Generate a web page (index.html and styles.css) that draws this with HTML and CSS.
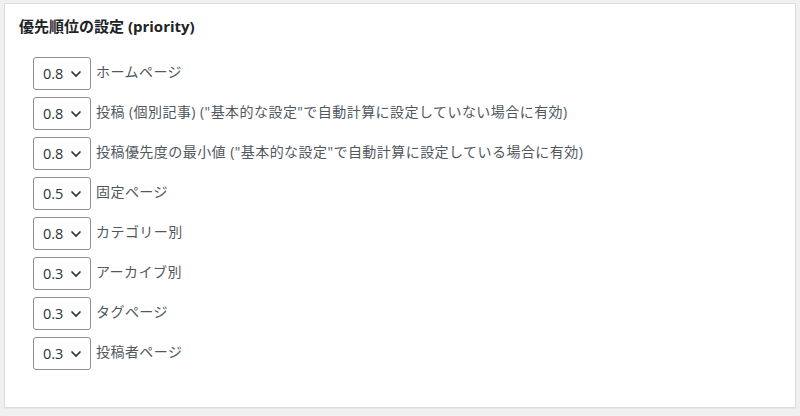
FILE: index.html
```html
<!DOCTYPE html>
<html lang="ja">
<head>
  <meta charset="UTF-8">
  <title>優先順位の設定</title>
  <link rel="stylesheet" href="styles.css">
</head>
<body>
  <div class="postbox">
    <h3 class="hndle">優先順位の設定 (priority)</h3>
    <ul class="priority-list">
      <li>
        <span class="select-wrap">
          <select><option>0.8</option></select>
          <svg class="chev" width="12" height="8" viewBox="0 0 12 8"><path d="M1.5 1.5 L6 6 L10.5 1.5" fill="none" stroke="#2c3338" stroke-width="1.7"/></svg>
        </span>
        <label>ホームページ</label>
      </li>
      <li>
        <span class="select-wrap">
          <select><option>0.8</option></select>
          <svg class="chev" width="12" height="8" viewBox="0 0 12 8"><path d="M1.5 1.5 L6 6 L10.5 1.5" fill="none" stroke="#2c3338" stroke-width="1.7"/></svg>
        </span>
        <label>投稿 (個別記事) ("基本的な設定"で自動計算に設定していない場合に有効)</label>
      </li>
      <li>
        <span class="select-wrap">
          <select><option>0.8</option></select>
          <svg class="chev" width="12" height="8" viewBox="0 0 12 8"><path d="M1.5 1.5 L6 6 L10.5 1.5" fill="none" stroke="#2c3338" stroke-width="1.7"/></svg>
        </span>
        <label>投稿優先度の最小値 ("基本的な設定"で自動計算に設定している場合に有効)</label>
      </li>
      <li>
        <span class="select-wrap">
          <select><option>0.5</option></select>
          <svg class="chev" width="12" height="8" viewBox="0 0 12 8"><path d="M1.5 1.5 L6 6 L10.5 1.5" fill="none" stroke="#2c3338" stroke-width="1.7"/></svg>
        </span>
        <label>固定ページ</label>
      </li>
      <li>
        <span class="select-wrap">
          <select><option>0.8</option></select>
          <svg class="chev" width="12" height="8" viewBox="0 0 12 8"><path d="M1.5 1.5 L6 6 L10.5 1.5" fill="none" stroke="#2c3338" stroke-width="1.7"/></svg>
        </span>
        <label>カテゴリー別</label>
      </li>
      <li>
        <span class="select-wrap">
          <select><option>0.3</option></select>
          <svg class="chev" width="12" height="8" viewBox="0 0 12 8"><path d="M1.5 1.5 L6 6 L10.5 1.5" fill="none" stroke="#2c3338" stroke-width="1.7"/></svg>
        </span>
        <label>アーカイブ別</label>
      </li>
      <li>
        <span class="select-wrap">
          <select><option>0.3</option></select>
          <svg class="chev" width="12" height="8" viewBox="0 0 12 8"><path d="M1.5 1.5 L6 6 L10.5 1.5" fill="none" stroke="#2c3338" stroke-width="1.7"/></svg>
        </span>
        <label>タグページ</label>
      </li>
      <li>
        <span class="select-wrap">
          <select><option>0.3</option></select>
          <svg class="chev" width="12" height="8" viewBox="0 0 12 8"><path d="M1.5 1.5 L6 6 L10.5 1.5" fill="none" stroke="#2c3338" stroke-width="1.7"/></svg>
        </span>
        <label>投稿者ページ</label>
      </li>
    </ul>
  </div>
</body>
</html>
```

FILE: styles.css
```css
body {
  margin: 0;
  padding: 3px 4px 6px 4px;
  background-color: #f0f0f1;
  font-family: "Open Sans", "Noto Sans CJK JP", sans-serif;
  font-size: 14px;
  color: #50575e;
}
.postbox {
  background-color: #fff;
  border: 1px solid #dcdcde;
  box-shadow: 0 1px 1px rgba(0, 0, 0, 0.04);
  height: 405px;
  box-sizing: border-box;
  padding: 0 14px;
}
.hndle {
  margin: 0;
  padding: 12px 0 0 0;
  height: 42px;
  box-sizing: border-box;
  font-size: 15px;
  font-weight: 700;
  line-height: 20px;
  color: #1d2327;
}
.priority-list {
  list-style: none;
  margin: 11px 0 0 0;
  padding: 0 0 0 14px;
}
.priority-list li {
  display: flex;
  align-items: center;
  height: 33px;
  margin-bottom: 7px;
}
.select-wrap {
  position: relative;
  display: inline-block;
  margin-right: 5px;
}
select {
  appearance: none;
  -webkit-appearance: none;
  width: 58px;
  height: 33px;
  padding: 0 20px 0 9px;
  border: 1px solid #8c8f94;
  border-radius: 3px;
  background: #fff;
  font-family: "Open Sans", sans-serif;
  font-size: 14.5px;
  color: #2c3338;
}
.chev {
  position: absolute;
  left: 37px;
  top: 13px;
  pointer-events: none;
}
label {
  line-height: 20px;
  margin-top: -4px;
  letter-spacing: 0.45px;
}
```
